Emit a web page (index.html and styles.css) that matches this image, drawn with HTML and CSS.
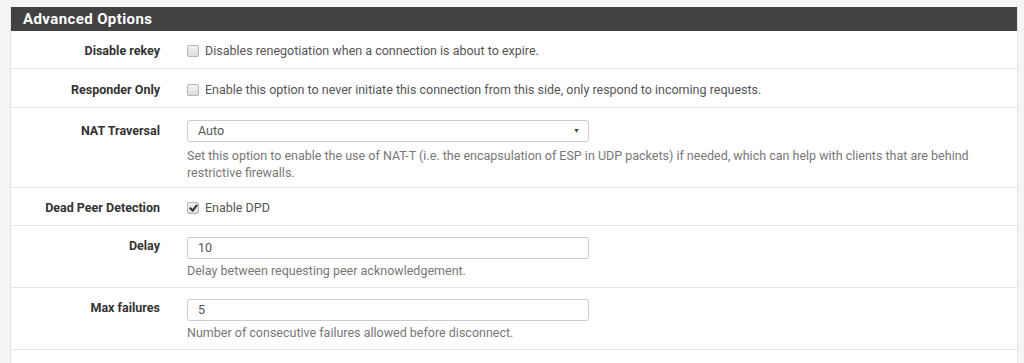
FILE: index.html
```html
<!DOCTYPE html>
<html lang="en">
<head>
  <meta charset="UTF-8">
  <title>Advanced Options</title>
  <link rel="stylesheet" href="styles.css">
</head>
<body>
  <!-- Advanced options panel -->
  <div class="panel">
    <h2 class="panel-title">Advanced Options</h2>

    <div class="form-row">
      <label class="form-label">Disable rekey</label>
      <div class="form-control">
        <label class="check"><span class="box"></span>Disables renegotiation when a connection is about to expire.</label>
      </div>
    </div>

    <div class="form-row row-loose">
      <label class="form-label">Responder Only</label>
      <div class="form-control">
        <label class="check"><span class="box"></span>Enable this option to never initiate this connection from this side, only respond to incoming requests.</label>
      </div>
    </div>

    <div class="form-row row-select">
      <label class="form-label">NAT Traversal</label>
      <div class="form-control">
        <div class="select"><span>Auto</span><span class="caret">&#9660;</span></div>
        <p class="help">Set this option to enable the use of NAT-T (i.e. the encapsulation of ESP in UDP packets) if needed, which can help with clients that are behind restrictive firewalls.</p>
      </div>
    </div>

    <div class="form-row">
      <label class="form-label">Dead Peer Detection</label>
      <div class="form-control">
        <label class="check"><span class="box checked"></span>Enable DPD</label>
      </div>
    </div>

    <div class="form-row row-input">
      <label class="form-label">Delay</label>
      <div class="form-control">
        <div class="input">10</div>
        <p class="help">Delay between requesting peer acknowledgement.</p>
      </div>
    </div>

    <div class="form-row row-input">
      <label class="form-label">Max failures</label>
      <div class="form-control">
        <div class="input">5</div>
        <p class="help">Number of consecutive failures allowed before disconnect.</p>
      </div>
    </div>

    <div class="form-row row-empty"></div>
  </div>
</body>
</html>
```

FILE: styles.css
```css
body {
  font-family: Roboto, "Liberation Sans", sans-serif;
  background-color: #f5f5f5;
  margin: 0;
  padding: 7px 0 0 10px;
  color: #444;
  font-size: 12.5px;
}

/* Panel */
.panel {
  width: 1006px;
  background-color: #fff;
  border-left: 1px solid #e4e4e4;
  border-right: 1px solid #e4e4e4;
}
.panel-title {
  margin: 0;
  height: 24px;
  line-height: 24px;
  padding-left: 12px;
  background-color: #424242;
  color: #fff;
  font-size: 15px;
  font-weight: bold;
  letter-spacing: 0.4px;
}

/* Rows */
.form-row {
  display: flex;
  align-items: flex-start;
  padding: 11px 0 8px;
  border-bottom: 1px solid #e6e6e6;
  line-height: 18px;
}
.row-loose {
  padding-top: 12px;
}
.row-select {
  padding: 12px 0 6px;
}
.row-input {
  padding: 11px 0 8px;
}
.row-empty {
  height: 14px;
  padding: 0;
  border-bottom: none;
}
.form-label {
  width: 149px;
  flex-shrink: 0;
  text-align: right;
  font-weight: bold;
  color: #333;
}
.row-select .form-label {
  margin-top: 2px;
}
.form-control {
  margin-left: 27px;
  width: 800px;
}

/* Checkbox */
.check {
  display: flex;
  align-items: center;
  height: 18px;
  color: #555;
}
.box {
  width: 10px;
  height: 10px;
  border: 1px solid #b5b5b5;
  border-radius: 2px;
  background: linear-gradient(#f2f2f2, #dcdcdc);
  margin-right: 6px;
  position: relative;
}
.box.checked::after {
  content: "";
  position: absolute;
  left: 3px;
  top: 0;
  width: 3px;
  height: 6px;
  border-right: 2px solid #333;
  border-bottom: 2px solid #333;
  transform: rotate(40deg);
}

/* Select and input */
.select,
.input {
  width: 385px;
  height: 20px;
  line-height: 20px;
  padding: 0 5px 0 10px;
  border: 1px solid #ccc;
  border-radius: 3px;
  color: #555;
  display: flex;
  justify-content: space-between;
}
.caret {
  font-size: 7px;
  color: #444;
  margin-right: 3px;
}
.help {
  margin: 5px 0 0;
  line-height: 17px;
  color: #777;
}
.row-input .help {
  margin-top: 3px;
}
```
